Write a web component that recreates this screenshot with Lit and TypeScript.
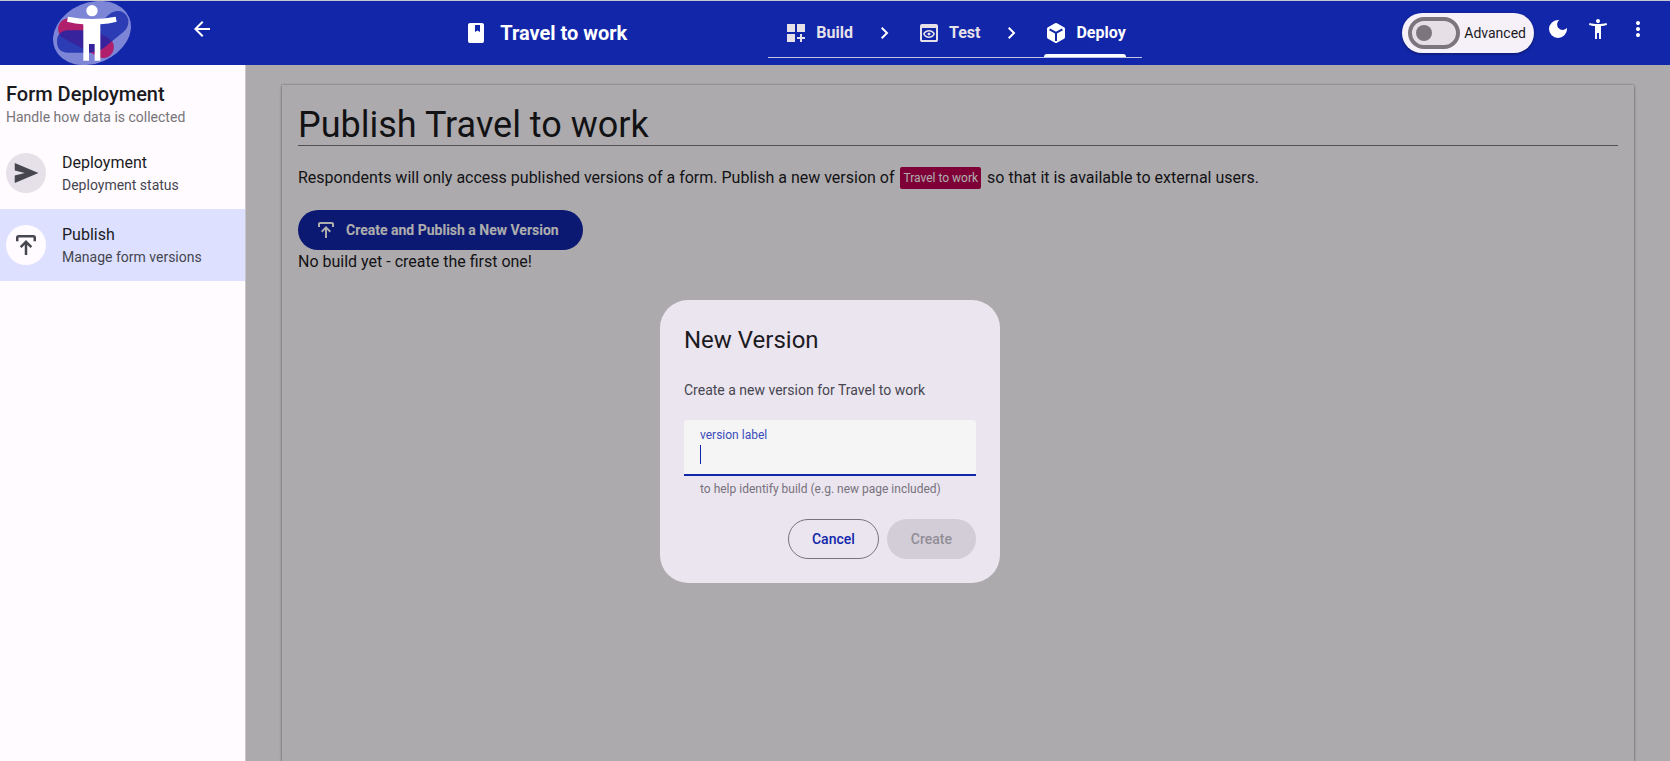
import { LitElement, html, css, svg } from "lit";
import { customElement, property, state } from "lit/decorators.js";

const ICONS: Record<string, string> = {
  back: "M7.83 13l5.6 5.6L12 20l-8-8 8-8 1.43 1.4L7.83 11H20v2z",
  book: "M6 22q-.82 0-1.41-.59T4 20V4q0-.82.59-1.41T6 2h12q.82 0 1.41.59T20 4v16q0 .82-.59 1.41T18 22zM11 4v7l2.5-1.5L16 11V4z",
  build: "M3 11V3h8v8zm0 10v-8h8v8zm10-10V3h8v8zm3 10v-3h-3v-2h3v-3h2v3h3v2h-3v3z",
  test: "M5 21q-.82 0-1.41-.59T3 19V5q0-.82.59-1.41T5 3h14q.82 0 1.41.59T21 5v14q0 .82-.59 1.41T19 21zm0-2h14V7H5zm7-2q-2.05 0-3.66-1.11T6 13q.73-1.78 2.34-2.89T12 9t3.66 1.11T18 13q-.73 1.78-2.34 2.89T12 17zm0-1.5q1.4 0 2.55-.66T16.35 13q-.65-1.18-1.8-1.84T12 10.500q-1.400 0-2.550.660T7.650 13q.650 1.180 1.800 1.840T12 15.500zm0-1q.630 0 1.060-.440T13.500 13t-.440-1.060T12 11.500t-1.060.440T10.500 13t.440 1.060T12 14.500z",
  deploy: "M11 21.730L4 17.700q-.48-.28-.74-.73T3 15.980V8.020q0-.54.26-.99T4 6.300l7-4.030q.48-.27 1-.27t1 .27l7 4.030q.48.28.74.73T21 8.020v7.960q0 .54-.26.99t-.74.730l-7 4.030q-.48.27-1 .27t-1-.27zM11 12.600V20h2v-7.400l5.900-3.400-1-1.720L12 10.850 6.100 7.480l-1 1.720z",
  chevron: "M12.600 12L8 7.400 9.400 6l6 6-6 6L8 16.600z",
  moon: "M12 21q-3.750 0-6.370-2.630T3 12t2.630-6.370T12 3q.350 0 .690.020t.660.080q-1.020.720-1.640 1.890T11.100 7.500q0 2.250 1.580 3.830T16.500 12.900q1.380 0 2.530-.610T20.900 10.650q.050.330.080.660T21 12q0 3.750-2.620 6.370T12 21z",
  person: "M12 6q-.82 0-1.410-.59T10 4t.590-1.410T12 2t1.410.590T14 4t-.590 1.410T12 6zM9 22V9q-1.500-.12-3.050-.37T3 8l.5-2q1.950.52 4.150.760T12 7t4.350-.24T20.500 6l.5 2q-1.400.380-2.950.630T15 9v13h-2v-6h-2v6z",
  more: "M12 20q-.82 0-1.410-.59T10 18t.590-1.410T12 16t1.410.590T14 18t-.590 1.410T12 20zm0-6q-.82 0-1.410-.59T10 12t.590-1.410T12 10t1.410.590T14 12t-.590 1.410T12 14zm0-6q-.82 0-1.410-.59T10 6t.590-1.410T12 4t1.410.590T14 6t-.590 1.410T12 8z",
  send: "M3 20v-6l8-2-8-2V4l19 8z",
  publish: "M11 20v-8.150L8.400 14.400 7 13l5-5 5 5-1.400 1.400-2.600-2.550V20zM4 9V6q0-.825.588-1.412T6 4h12q.825 0 1.413.588T20 6v3h-2V6H6v3z",
};

@customElement("ui-icon")
class UiIcon extends LitElement {
  static styles = css`
    :host { display: inline-flex; flex: none; width: 24px; height: 24px; }
    svg { width: 100%; height: 100%; fill: currentColor; fill-rule: evenodd; }
  `;
  @property() name = "";
  render() {
    return html`<svg viewBox="0 0 24 24" aria-hidden="true">${svg`<path d=${ICONS[this.name] ?? ""}></path>`}</svg>`;
  }
}

@customElement("app-logo")
class AppLogo extends LitElement {
  static styles = css`
    :host { display: block; width: 78px; height: 64px; }
    svg { display: block; }
  `;
  render() {
    return html`<svg width="78" height="64" viewBox="159 3 234 192" role="img" aria-label="Home">
      <ellipse cx="276" cy="99" rx="121" ry="91" transform="rotate(-23 276 99)" fill="#7c85d6"></ellipse>
      <path d="M206 87L310 142" fill="none" stroke="#b01f6c" stroke-width="64" stroke-linecap="round"></path>
      <path d="M204 91H262Q280 89 296 74L322 48Q340 30 362 34Q386 42 385 68Q384 84 370 96L314 142Q294 158 268 158H204Q171 156 171 125Q171 93 204 91Z" fill="#1226aa" fill-opacity=".77"></path>
      <circle cx="276" cy="32" r="17" fill="#fff"></circle>
      <path d="M204 50Q276 64 347 50L350 65Q326 71 301 73V182H284V132H267V182H250V73Q226 71 201 65Z" fill="#fff"></path>
    </svg>`;
  }
}

@customElement("app-header")
class AppHeader extends LitElement {
  static styles = css`
    :host { display: block; }
    * { box-sizing: border-box; }
    .bar {
      display: grid; grid-template-columns: 246px 1fr auto 1fr; height: 65px; padding-right: 6px;
      background: #1226aa; border-top: 1px solid #c6c6d0; color: #fff;
    }
    .brand { display: flex; padding-left: 53px; gap: 51px; }
    .icon-btn {
      display: flex; align-items: center; justify-content: center; width: 40px; height: 40px;
      padding: 0; border: 0; background: none; color: inherit; cursor: pointer;
    }
    .brand .icon-btn { margin-top: 8px; }
    .title { display: flex; align-items: center; justify-content: flex-end; gap: 12px; padding-right: 141px; white-space: nowrap; }
    .title h2 { margin: 0; font-size: 20px; font-weight: 700; line-height: 24px; }
    .nav { display: flex; align-items: center; align-self: start; gap: 20px; height: 57px; padding: 8px 16px 0; border-bottom: 1px solid #c2c5e8; }
    .tab {
      display: flex; align-items: center; gap: 8px; height: 48px; color: #e6e0e9; border-bottom: 3px solid transparent; padding-top: 3px;
      font-size: 16px; font-weight: 700; line-height: 24px; text-decoration: none;
    }
    .tab.active { position: relative; color: #fff; }
    .tab.active::after { content: ""; position: absolute; left: 0; right: 0; bottom: -3px; height: 3px; border-radius: 3px 3px 0 0; background: #fff; }
    .tools { display: flex; justify-content: flex-end; padding-right: 6px; }
    .tools .icon-btn { margin-top: 8px; }
    .pill {
      display: flex; align-items: center; gap: 4px; height: 40px; margin: 12px 4px 0 0; padding: 0 8px 0 6px;
      border-radius: 20px; background: #f6f1f9; color: #1b1b1f; font-size: 14px; line-height: 20px; box-shadow: 0 1px 3px rgba(0, 0, 0, .4);
    }
    .switch {
      appearance: none; display: flex; align-items: center; width: 52px; height: 32px; margin: 0; padding: 0 4px;
      border: 4px solid #7c757e; border-radius: 16px; background: #e6e0e6; cursor: pointer;
    }
    .switch::before { content: ""; width: 16px; height: 16px; border-radius: 8px; background: #7c757e; }
    .switch:checked { justify-content: flex-end; }
  `;
  render() {
    return html`<header class="bar">
      <div class="brand">
        <app-logo></app-logo>
        <button class="icon-btn" aria-label="Back"><ui-icon name="back"></ui-icon></button>
      </div>
      <div class="title"><ui-icon name="book"></ui-icon><h2>Travel to work</h2></div>
      <nav class="nav">
        <a class="tab" href="#build"><ui-icon name="build"></ui-icon>Build</a>
        <ui-icon name="chevron"></ui-icon>
        <a class="tab" href="#test"><ui-icon name="test"></ui-icon>Test</a>
        <ui-icon name="chevron"></ui-icon>
        <a class="tab active" href="#deploy" aria-current="page"><ui-icon name="deploy"></ui-icon>Deploy</a>
      </nav>
      <div class="tools">
        <label class="pill"><input class="switch" type="checkbox" role="switch" />Advanced</label>
        <button class="icon-btn" aria-label="Dark mode"><ui-icon name="moon"></ui-icon></button>
        <button class="icon-btn" aria-label="Accessibility"><ui-icon name="person"></ui-icon></button>
        <button class="icon-btn" aria-label="More"><ui-icon name="more"></ui-icon></button>
      </div>
    </header>`;
  }
}

@customElement("app-sidebar")
class AppSidebar extends LitElement {
  static styles = css`
    :host { display: block; width: 246px; flex: none; box-sizing: border-box; background: #fffbff; border-right: 1px solid #c9c6ca; }
    .head { padding: 16px 6px 10px; }
    h1 { margin: 0; font-size: 20px; font-weight: 500; line-height: 26px; color: #1b1b1f; }
    p { margin: 0; font-size: 14px; line-height: 20px; color: #77757a; }
    .item { display: flex; align-items: center; gap: 16px; height: 72px; padding: 0 6px; color: #1b1b1f; text-decoration: none; }
    .item.active { background: #dde1ff; }
    .badge { display: flex; align-items: center; justify-content: center; width: 40px; height: 40px; border-radius: 20px; background: #e6e1e8; color: #46464f; }
    .active .badge { background: #fffbff; }
    .badge ui-icon { width: 30px; height: 30px; }
    .name { display: block; font-size: 16px; line-height: 24px; }
    .note { display: block; font-size: 14px; line-height: 20px; color: #46464f; }
  `;
  items = [
    { name: "Deployment", note: "Deployment status", icon: "send", active: false },
    { name: "Publish", note: "Manage form versions", icon: "publish", active: true },
  ];
  render() {
    return html`<div class="head"><h1>Form Deployment</h1><p>Handle how data is collected</p></div>
      <nav>${this.items.map((i) => html`<a class="item ${i.active ? "active" : ""}" href="#${i.icon}">
        <span class="badge"><ui-icon name=${i.icon}></ui-icon></span>
        <span><span class="name">${i.name}</span><span class="note">${i.note}</span></span>
      </a>`)}</nav>`;
  }
}

@customElement("version-dialog")
class VersionDialog extends LitElement {
  static styles = css`
    * { box-sizing: border-box; }
    .dialog { width: 340px; padding: 24px; border-radius: 28px; background: #ebe5ef; color: #46464f; font-size: 14px; line-height: 20px; }
    h2 { margin: 0 0 24px; font-size: 24px; font-weight: 400; line-height: 32px; color: #1b1b1f; }
    p { margin: 0 0 20px; }
    .field { position: relative; display: flex; flex-direction: column; height: 56px; padding: 6px 16px 0; border-radius: 4px 4px 0 0; background: #f5f5f5; border-bottom: 2px solid #1226aa; }
    .field label { font-size: 12px; line-height: 18px; color: #3a4cba; }
    .field input { width: 100%; height: 24px; padding: 0; border: 0; outline: 0; background: none; font: inherit; font-size: 16px; caret-color: transparent; }
    .caret { position: absolute; left: 16px; top: 25px; width: 1px; height: 19px; background: #1226aa; }
    .hint { display: block; padding: 3px 16px 0; font-size: 12px; line-height: 20px; color: #77727c; }
    .actions { display: flex; justify-content: flex-end; gap: 8px; margin-top: 20px; }
    button { height: 40px; padding: 0 24px; border: 0; border-radius: 20px; font: inherit; font-weight: 500; }
    .cancel { padding: 0 23px; border: 1px solid #77727c; background: none; color: #1226aa; }
    .create { background: #d3cdd8; color: #918d96; }
  `;
  @state() value = "";
  render() {
    return html`<section class="dialog" role="dialog" aria-labelledby="title">
      <h2 id="title">New Version</h2>
      <p>Create a new version for Travel to work</p>
      <div class="field">
        <label for="version">version label</label>
        <input id="version" aria-describedby="hint" .value=${this.value} @input=${(e: Event) => (this.value = (e.target as HTMLInputElement).value)} />
        <span class="caret"></span>
      </div>
      <span class="hint" id="hint">to help identify build (e.g. new page included)</span>
      <div class="actions">
        <button class="cancel">Cancel</button>
        <button class="create" ?disabled=${!this.value}>Create</button>
      </div>
    </section>`;
  }
}

@customElement("app-root")
class AppRoot extends LitElement {
  static styles = css`
    :host { display: flex; flex-direction: column; height: 100vh; overflow: hidden; position: relative; font-family: Roboto, "Liberation Sans", sans-serif; background: #fffbff; }
    * { box-sizing: border-box; }
    .body { display: flex; flex: 1; min-height: 0; }
    main { position: relative; flex: 1; padding: 20px 36px 0; color: #1b1b1f; font-size: 16px; line-height: 24px; display: flex; }
    .card { flex: 1; padding: 20px 16px 0; box-shadow: 0 1px 3px rgba(0, 0, 0, .3), 0 0 2px rgba(0, 0, 0, .3); }
    h1 { margin: 0 0 20px; font-size: 36px; font-weight: 400; line-height: 40px; border-bottom: 1px solid #77757a; }
    p { margin: 0; }
    .lead { margin-bottom: 20px; }
    .chip { display: inline-block; margin: 0 2px; padding: 0 3px; border-radius: 2px; background: #ba0050; color: #fff; font-size: 12px; line-height: 22px; vertical-align: 1px; }
    .primary { display: flex; align-items: center; gap: 8px; height: 40px; padding: 0 24px 0 16px; border: 0; border-radius: 20px; background: #1226aa; color: #fff; font: inherit; font-size: 14px; font-weight: 700; }
    .scrim { position: absolute; inset: 0; background: rgba(0, 0, 0, .32); }
    .overlay { position: absolute; inset: 0; display: flex; justify-content: center; align-items: flex-start; padding: 300px 10px 0 0; pointer-events: none; }
    version-dialog { pointer-events: auto; }
  `;
  render() {
    return html`<app-header></app-header>
      <div class="body">
        <app-sidebar></app-sidebar>
        <main>
          <div class="card">
            <h1>Publish Travel to work</h1>
            <p class="lead">Respondents will only access published versions of a form. Publish a new version of <span class="chip">Travel to work</span> so that it is available to external users.</p>
            <button class="primary"><ui-icon name="publish"></ui-icon>Create and Publish a New Version</button>
            <p>No build yet - create the first one!</p>
          </div>
          <div class="scrim"></div>
        </main>
      </div>
      <div class="overlay"><version-dialog></version-dialog></div>`;
  }
}
